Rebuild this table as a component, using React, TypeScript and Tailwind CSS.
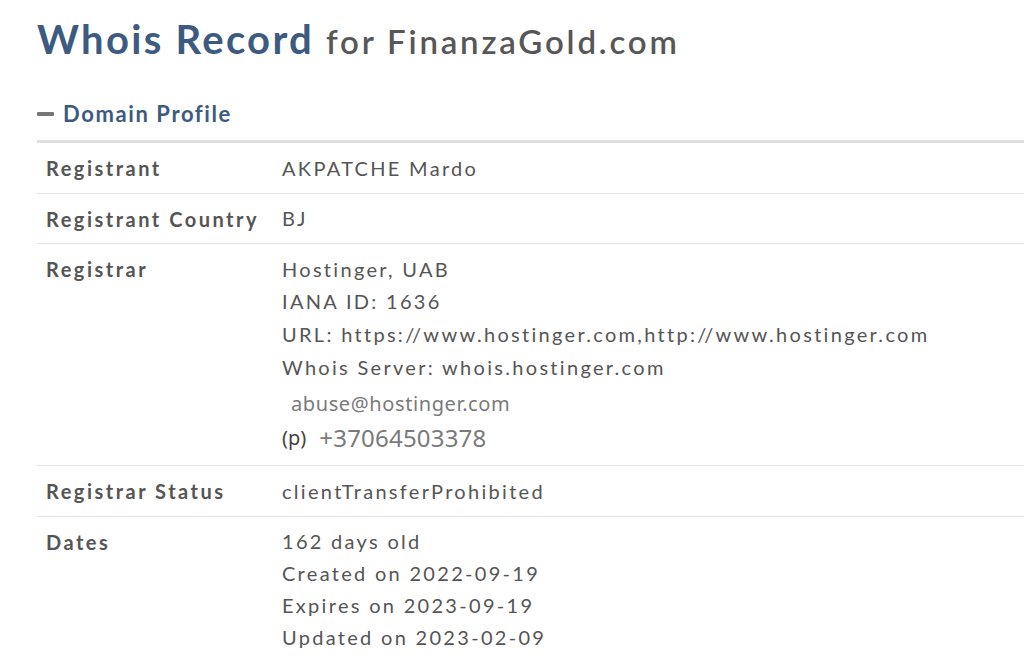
import React from "react";

function Row({ label, children, last }: { label: string; children: React.ReactNode; last?: boolean }) {
  return (
    <div className={`flex ${last ? "" : "border-b border-[#e6e6e6]"}`}>
      <div className="w-[245px] shrink-0 pl-[9px] pt-[9px] pb-[8px] font-bold text-[#555] leading-[32px] tracking-[2.5px]">{label}</div>
      <div className="flex-1 pt-[8.5px] pb-[9px] text-[#555] leading-[32px] tracking-[2.3px]">{children}</div>
    </div>
  );
}

export default function App() {
  return (
    <div className="w-[1024px] h-[660px] overflow-hidden bg-white" style={{ fontFamily: "Lato, 'Noto Sans', sans-serif" }}>
      <div className="pl-[37px] pt-[11px]">
        <h1 className="flex items-baseline whitespace-nowrap">
          <span className="text-[40px] font-bold text-[#3d5a80] leading-[56px] tracking-[2.3px]">Whois Record</span>
          <span className="ml-[12px] text-[33px] font-semibold text-[#575757] tracking-[2.8px]">for FinanzaGold.com</span>
        </h1>
        <div className="mt-[33px] flex items-center">
          <span className="block w-[17px] h-[4px] bg-[#777] rounded-[1px]" />
          <span className="ml-[9px] text-[22px] font-bold text-[#3d5a80] leading-[28px] tracking-[1.6px]">Domain Profile</span>
        </div>
        <div className="mt-[12px] border-t-[3px] border-[#dedede] text-[20px]">
          <Row label="Registrant">AKPATCHE Mardo</Row>
          <Row label="Registrant Country">BJ</Row>
          <div className="flex border-b border-[#e6e6e6]">
            <div className="w-[245px] shrink-0 pl-[9px] pt-[9px] font-bold text-[#555] leading-[32px] tracking-[2.5px]">Registrar</div>
            <div className="flex-1 pt-[8.5px] pb-[10px] text-[#555] leading-[32.7px] tracking-[2.3px]">
              <div>Hostinger, UAB</div>
              <div>IANA ID: 1636</div>
              <div className="whitespace-nowrap">URL: https://www.hostinger.com,http://www.hostinger.com</div>
              <div>Whois Server: whois.hostinger.com</div>
              <div
                className="mt-[4px] pl-[9px] text-[20px] leading-[34px] text-[#7a7a7a] tracking-[0.6px]"
                style={{ fontFamily: "'Noto Sans', 'Open Sans', sans-serif" }}
              >
                abuse@hostinger.com
              </div>
              <div className="flex items-center leading-[34px] tracking-normal" style={{ fontFamily: "'Noto Sans', 'Open Sans', sans-serif" }}>
                <span className="text-[20px] text-[#444]">(p)</span>
                <span className="ml-[13px] text-[24px] text-[#7a7a7a] tracking-[0.2px]">+37064503378</span>
              </div>
            </div>
          </div>
          <Row label="Registrar Status">clientTransferProhibited</Row>
          <Row label="Dates" last>
            <div>162 days old</div>
            <div>Created on 2022-09-19</div>
            <div>Expires on 2023-09-19</div>
            <div>Updated on 2023-02-09</div>
          </Row>
        </div>
      </div>
    </div>
  );
}
